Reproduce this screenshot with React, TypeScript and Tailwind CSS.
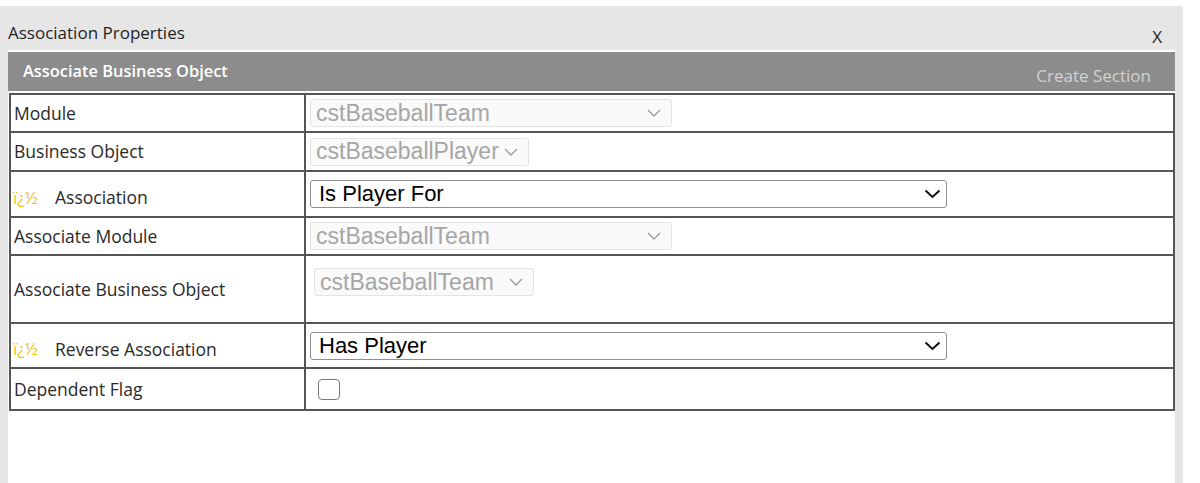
const labelFont = { fontFamily: '"Open Sans", "Noto Sans", sans-serif' };

function Chevron({ dark }: { dark?: boolean }) {
  return dark ? (
    <svg width="17" height="10" viewBox="0 0 17 10" fill="none">
      <path d="M1.5 1.5 L8.5 8 L15.5 1.5" stroke="#111" strokeWidth="2" />
    </svg>
  ) : (
    <svg width="14" height="8" viewBox="0 0 14 8" fill="none">
      <path d="M1 1 L7 7 L13 1" stroke="#9a9a9a" strokeWidth="1.3" />
    </svg>
  );
}

function DisabledSelect({ value, width, gap }: { value: string; width: string; gap?: boolean }) {
  return (
    <div
      className={`${width} h-[28px] flex items-center justify-between pl-[5px] pr-[10px] bg-[#fafafa] border border-[#e3e3e3] rounded-[3px] text-[23px] leading-none text-[#a6a6a6]`}
      style={{ fontFamily: '"Liberation Sans", Arial, sans-serif' }}
    >
      <span className={gap ? "pr-2" : ""}>{value}</span>
      <Chevron />
    </div>
  );
}

function ActiveSelect({ value }: { value: string }) {
  return (
    <div
      className="w-[637px] h-[28px] flex items-center justify-between pl-[8px] pr-[5px] bg-white border border-[#8f8f8f] rounded-[3px] text-[22px] leading-none text-black"
      style={{ fontFamily: '"Liberation Sans", Arial, sans-serif' }}
    >
      <span>{value}</span>
      <Chevron dark />
    </div>
  );
}

function Row({
  label,
  h,
  mark,
  last,
  children,
}: {
  label: string;
  h: string;
  mark?: boolean;
  last?: boolean;
  children: React.ReactNode;
}) {
  return (
    <div className={`flex ${h} ${last ? "" : "border-b-2 border-[#555]"}`}>
      <div className="w-[295px] shrink-0 border-r-2 border-[#555] flex items-center text-[17.5px] text-[#2a2a2a]">
        {mark ? (
          <span className="pl-[2px] pt-[7px] flex items-center">
            <span className="text-[17px] text-[#f2c21b] w-[42px]">ï¿½</span>
            <span>{label}</span>
          </span>
        ) : (
          <span className="pl-[3px]">{label}</span>
        )}
      </div>
      <div className="flex-1 flex items-center pl-1">{children}</div>
    </div>
  );
}

export default function App() {
  return (
    <div className="w-[1200px] h-[483px] bg-white pt-[6px]" style={labelFont}>
      <div className="w-[1183px] h-full bg-[#e6e6e6] flex flex-col px-2">
        <div className="h-[44px] flex justify-between shrink-0">
          <div className="pt-[15px] text-[17px] leading-[23px] text-[#1f1f1f]">Association Properties</div>
          <div className="pt-[19px] pr-[13px] text-[17px] leading-[23px] text-[#1f1f1f]">X</div>
        </div>
        <div className="border-t-2 border-white h-[41px] bg-[#8c8c8c] flex justify-between shrink-0">
          <div className="pl-[15px] pt-[8px] text-[16.4px] leading-[22px] font-semibold text-white">
            Associate Business Object
          </div>
          <div className="pr-[24px] pt-[12px] text-[17px] leading-[23px] text-[#d2d2d2]">Create Section</div>
        </div>
        <div className="flex-1 bg-white pt-[2px]">
          <div className="ml-px border-2 border-[#555] bg-white">
            <Row label="Module" h="h-[38px]">
              <DisabledSelect value="cstBaseballTeam" width="w-[362px]" />
            </Row>
            <Row label="Business Object" h="h-[39px]">
              <DisabledSelect value="cstBaseballPlayer" width="w-[219px]" />
            </Row>
            <Row label="Association" h="h-[46px]" mark>
              <ActiveSelect value="Is Player For" />
            </Row>
            <Row label="Associate Module" h="h-[38px]">
              <DisabledSelect value="cstBaseballTeam" width="w-[362px]" />
            </Row>
            <Row label="Associate Business Object" h="h-[68px]">
              <div className="self-start pt-[12px] pl-[4px]">
                <DisabledSelect value="cstBaseballTeam" width="w-[220px]" gap />
              </div>
            </Row>
            <Row label="Reverse Association" h="h-[45px]" mark>
              <ActiveSelect value="Has Player" />
            </Row>
            <Row label="Dependent Flag" h="h-[40px]" last>
              <div className="ml-[8px] w-[22px] h-[21px] border-[1.5px] border-[#767676] rounded-[4px] bg-white" />
            </Row>
          </div>
        </div>
      </div>
    </div>
  );
}
